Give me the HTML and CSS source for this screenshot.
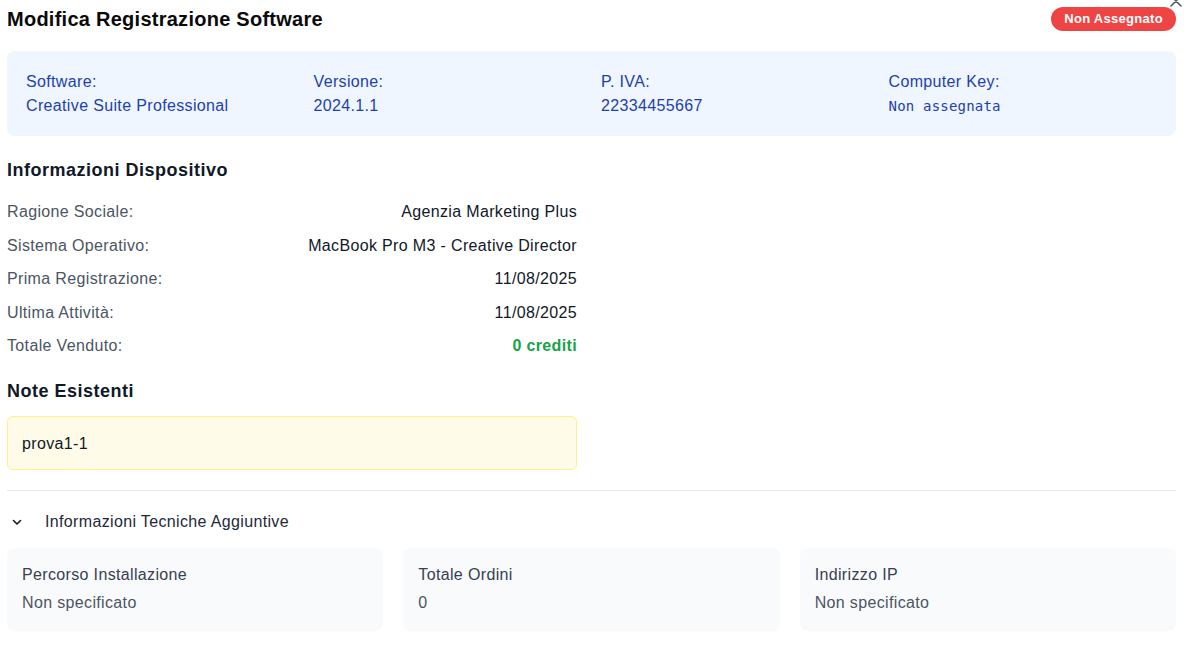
FILE: index.html
```html
<!DOCTYPE html>
<html lang="it">
<head>
<meta charset="utf-8">
<title>Modifica Registrazione Software</title>
<link rel="stylesheet" href="styles.css">
</head>
<body>
<div class="dialog">
  <button class="close" aria-label="Chiudi">
    <svg width="14" height="14" viewBox="0 0 14 14"><path d="M2 2 L12 12 M12 2 L2 12" stroke="#4b5563" stroke-width="1.5" stroke-linecap="round" fill="none"/></svg>
  </button>
  <header class="head">
    <h1 class="title">Modifica Registrazione Software</h1>
    <span class="badge">Non Assegnato</span>
  </header>

  <section class="summary">
    <div class="sum-item"><div>Software:</div><div>Creative Suite Professional</div></div>
    <div class="sum-item"><div>Versione:</div><div>2024.1.1</div></div>
    <div class="sum-item"><div>P. IVA:</div><div>22334455667</div></div>
    <div class="sum-item"><div>Computer Key:</div><div class="mono">Non assegnata</div></div>
  </section>

  <div class="cols">
    <div class="col">
      <h2 class="sec-title">Informazioni Dispositivo</h2>
      <div class="rows">
        <div class="row"><span class="lbl">Ragione Sociale:</span><span class="val">Agenzia Marketing Plus</span></div>
        <div class="row"><span class="lbl">Sistema Operativo:</span><span class="val">MacBook Pro M3 - Creative Director</span></div>
        <div class="row"><span class="lbl">Prima Registrazione:</span><span class="val">11/08/2025</span></div>
        <div class="row"><span class="lbl">Ultima Attività:</span><span class="val">11/08/2025</span></div>
        <div class="row"><span class="lbl">Totale Venduto:</span><span class="val green">0 crediti</span></div>
      </div>
      <h2 class="sec-title notes-title">Note Esistenti</h2>
      <div class="note">prova1-1</div>
    </div>
    <div class="col"></div>
  </div>

  <div class="divider"></div>

  <div class="toggle">
    <svg class="chev" width="12" height="12" viewBox="0 0 12 12"><path d="M2.5 4.5 L6 8 L9.5 4.5" stroke="#111827" stroke-width="1.6" fill="none" stroke-linecap="round" stroke-linejoin="round"/></svg>
    <span>Informazioni Tecniche Aggiuntive</span>
  </div>

  <div class="cards">
    <div class="card"><div class="c-lbl">Percorso Installazione</div><div class="c-val">Non specificato</div></div>
    <div class="card"><div class="c-lbl">Totale Ordini</div><div class="c-val">0</div></div>
    <div class="card"><div class="c-lbl">Indirizzo IP</div><div class="c-val">Non specificato</div></div>
  </div>
</div>
</body>
</html>
```
FILE: styles.css
```css
* { box-sizing: border-box; }
html, body { margin: 0; padding: 0; background: #fff; }
body {
  font-family: "Liberation Sans", Arial, sans-serif;
  font-size: 16px;
  line-height: 24px;
  letter-spacing: 0.35px;
  color: #111827;
}
.dialog {
  position: relative;
  width: 1198px;
  padding: 0 22px 0 7px;
}
.close {
  position: absolute;
  top: -6px;
  right: 15px;
  border: 0;
  background: transparent;
  padding: 0;
  width: 14px;
  height: 14px;
  display: flex;
}
.head {
  display: flex;
  align-items: center;
  justify-content: space-between;
  height: 37px;
}
.title {
  margin: 0;
  font-size: 20px;
  font-weight: 700;
  line-height: 28px;
  letter-spacing: 0.26px;
  color: #0a0a0a;
}
.badge {
  background: #ef4444;
  color: #fff;
  font-weight: 700;
  font-size: 13px;
  line-height: 24px;
  letter-spacing: 0.3px;
  padding: 0 13px;
  border-radius: 12px;
  margin-top: 1px;
}
.summary {
  margin-top: 14px;
  background: #eff6ff;
  border-radius: 8px;
  padding: 19px 19px 18px;
  display: grid;
  grid-template-columns: repeat(4, 1fr);
  column-gap: 19px;
  color: #1e40af;
}
.mono {
  font-family: "DejaVu Sans Mono", "Liberation Mono", monospace;
  font-size: 14px;
  letter-spacing: 0.2px;
}
.cols {
  display: grid;
  grid-template-columns: 570px 1fr;
  gap: 30px;
}
.sec-title {
  margin: 20px 0 16px;
  font-size: 18px;
  font-weight: 700;
  line-height: 28px;
  letter-spacing: 0.5px;
  color: #111827;
}
.notes-title { margin: 19px 0 11px; }
.rows {
  display: flex;
  flex-direction: column;
  gap: 9.5px;
}
.row {
  display: flex;
  justify-content: space-between;
}
.lbl { color: #4b5563; }
.val { color: #111827; }
.green { color: #16a34a; font-weight: 700; }
.note {
  background: #fefce8;
  border: 1px solid #fef08a;
  border-radius: 6px;
  padding: 15px 14px 14px;
  line-height: 23px;
  color: #111827;
}
.divider {
  height: 1px;
  background: #e5e7eb;
  margin-top: 20px;
}
.toggle {
  display: flex;
  align-items: center;
  gap: 22px;
  padding: 19px 0 0 4px;
  color: #1f2937;
}
.chev { flex: none; }
.cards {
  margin-top: 14px;
  display: grid;
  grid-template-columns: repeat(3, 1fr);
  gap: 20px;
}
.card {
  background: #f9fafb;
  border-radius: 8px;
  padding: 15px 15px 16px;
}
.c-lbl { color: #374151; margin-bottom: 4px; }
.c-val { color: #4b5563; }
```
